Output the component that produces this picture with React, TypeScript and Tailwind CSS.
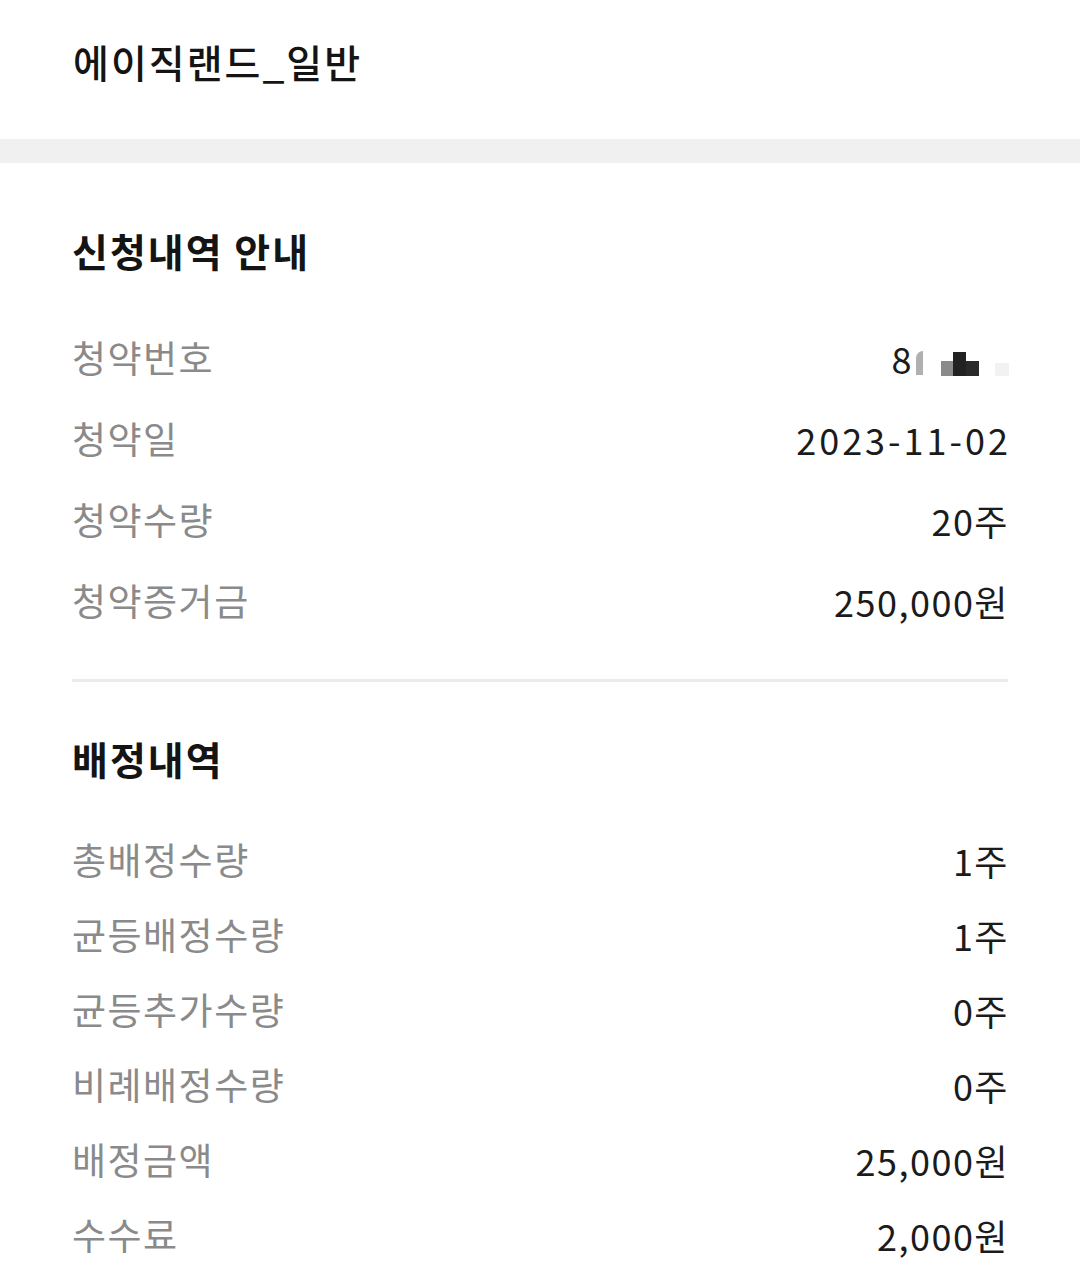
type Row = {
  label: string;
  value: React.ReactNode;
  wide?: boolean;
};

const font = { fontFamily: '"Noto Sans CJK KR", "Noto Sans", sans-serif' };

function MaskedNumber() {
  return (
    <span className="flex items-end">
      <span>8</span>
      <span className="mb-[10px] ml-[3px] h-[24px] w-[7px] rounded-tl-[8px] bg-[#b0b0b0]" />
      <span className="mb-[9px] ml-[18px] flex items-end">
        <span className="h-[15px] w-[12px] bg-[#8a8a8a]" />
        <span className="h-[24px] w-[13px] bg-[#222]" />
        <span className="h-[15px] w-[13px] bg-[#2a2a2a]" />
      </span>
      <span className="mb-[9px] ml-[16px] h-[13px] w-[14px] bg-[#f2f2f2]" />
    </span>
  );
}

const applyRows: Row[] = [
  { label: "청약번호", value: <MaskedNumber /> },
  { label: "청약일", value: "2023-11-02", wide: true },
  { label: "청약수량", value: "20주" },
  { label: "청약증거금", value: "250,000원" },
];

const allotRows: Row[] = [
  { label: "총배정수량", value: "1주" },
  { label: "균등배정수량", value: "1주" },
  { label: "균등추가수량", value: "0주" },
  { label: "비례배정수량", value: "0주" },
  { label: "배정금액", value: "25,000원" },
  { label: "수수료", value: "2,000원" },
];

function InfoRow({ row, tall }: { row: Row; tall?: boolean }) {
  return (
    <div
      className={[
        "flex items-center justify-between",
        tall ? "h-[81px]" : "h-[75px]",
      ].join(" ")}
    >
      <span className="text-[37px] tracking-[1.5px] text-[#8a8a8a]">
        {row.label}
      </span>
      <span
        className={[
          "text-[36px] text-[#1b1b1b]",
          row.wide ? "-mr-[3px] tracking-[3px]" : "-mr-[1px] tracking-[1.5px]",
        ].join(" ")}
      >
        {row.value}
      </span>
    </div>
  );
}

export default function App() {
  return (
    <div className="min-h-[1287px] w-[1080px] bg-white" style={font}>
      <header className="flex h-[139px] items-start px-[73px] pt-[34px]">
        <h1 className="text-[39px] font-medium leading-[54px] tracking-[2px] text-[#141414]">
          에이직랜드_일반
        </h1>
      </header>
      <div className="h-[24px] bg-[#f0f0f0]" />

      <main className="px-[72px]">
        <section className="pb-[38px]">
          <h2 className="pt-[61px] pb-[41px] text-[39px] font-bold leading-[52px] tracking-[2px] text-[#141414]">
            신청내역 안내
          </h2>
          {applyRows.map((row) => (
            <InfoRow key={row.label} row={row} tall />
          ))}
        </section>

        <div className="h-[3px] bg-[#ebebeb]" />

        <section>
          <h2 className="pt-[50px] pb-[38px] text-[39px] font-bold leading-[52px] tracking-[2px] text-[#141414]">
            배정내역
          </h2>
          {allotRows.map((row) => (
            <InfoRow key={row.label} row={row} />
          ))}
        </section>
      </main>
    </div>
  );
}
